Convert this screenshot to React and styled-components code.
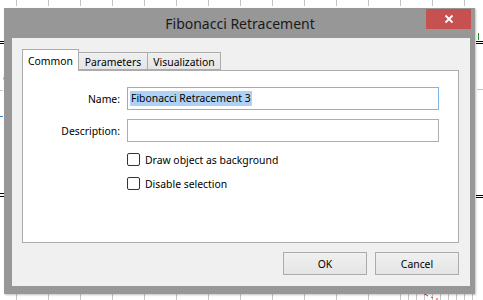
import React from "react";
import styled, { createGlobalStyle } from "styled-components";

const GlobalStyle = createGlobalStyle`
  html, body { margin: 0; padding: 0; background: #ffffff; overflow: hidden; }
  body { font-family: "Noto Sans", "Open Sans", sans-serif; }
`;

const Page = styled.div`
  position: relative;
  width: 483px;
  height: 300px;
  box-sizing: border-box;
  padding: 8px 0 0 4px;
  background: #ffffff;
`;

const ChartLayer = styled.svg`
  position: absolute;
  left: 0;
  top: 0;
  width: 483px;
  height: 300px;
`;

const Window = styled.div`
  position: relative;
  width: 471px;
  height: 286px;
  box-sizing: border-box;
  background: #979797;
  padding: 0 5px 8px 8px;
  display: flex;
  flex-direction: column;
  box-shadow: 1px 1px 2px rgba(0, 0, 0, 0.25);
`;

const TitleBar = styled.div`
  height: 30px;
  display: flex;
  align-items: center;
  justify-content: center;
  font-size: 14px;
  color: #1a1a1a;
  padding-right: 2px;
`;

const CloseButton = styled.div`
  position: absolute;
  top: 1px;
  right: 4px;
  width: 45px;
  height: 20px;
  background: #c75050;
  display: flex;
  align-items: center;
  justify-content: center;
`;

const Client = styled.div`
  flex: 1;
  background: #f0f0f0;
  padding: 11px 11px 11px 10px;
  display: flex;
  flex-direction: column;
  font-size: 10.4px;
  color: #000;
`;

const TabBar = styled.div`
  display: flex;
  align-items: flex-end;
  height: 21px;
  position: relative;
  z-index: 1;
`;

const Tab = styled.div`
  box-sizing: border-box;
  height: ${(p) => (p.$selected ? "22px" : "18px")};
  width: ${(p) => p.$w}px;
  margin-left: ${(p) => (p.$first ? "0" : "-1px")};
  border: 1px solid #acacac;
  border-bottom: ${(p) => (p.$selected ? "none" : "1px solid #acacac")};
  background: ${(p) =>
    p.$selected ? "#ffffff" : "linear-gradient(#f0f0f0, #e5e5e5)"};
  display: flex;
  align-items: center;
  justify-content: center;
  padding-top: ${(p) => (p.$selected ? "0" : "1px")};
  margin-bottom: ${(p) => (p.$selected ? "-1px" : "0")};
  position: relative;
  z-index: ${(p) => (p.$selected ? 2 : 1)};
`;

const Panel = styled.div`
  flex: 1;
  background: #ffffff;
  border: 1px solid #acacac;
  margin-top: 0;
  padding: 16px 19px 0 0;
  display: grid;
  grid-template-columns: 97px 312px;
  column-gap: 7px;
  grid-auto-rows: min-content;
  align-content: start;
`;

const Label = styled.div`
  text-align: right;
  align-self: center;
  margin-top: ${(p) => p.$mt || 0}px;
`;

const Field = styled.div`
  box-sizing: border-box;
  height: 23px;
  border: 1px solid ${(p) => (p.$focused ? "#7eb4ea" : "#abadb3")};
  background: #fff;
  display: flex;
  align-items: center;
  padding-left: 2px;
  margin-top: ${(p) => p.$mt || 0}px;
`;

const Selected = styled.span`
  background: #aed1f5;
  line-height: 15px;
  padding: 0 1px;
`;

const CheckRow = styled.label`
  grid-column: 2;
  display: flex;
  align-items: center;
  gap: 5px;
  height: 13px;
  margin-top: ${(p) => p.$mt}px;
`;

const Box = styled.span`
  box-sizing: border-box;
  width: 13px;
  height: 13px;
  border: 1px solid #333;
  border-radius: 2px;
  background: #fff;
`;

const ButtonRow = styled.div`
  display: flex;
  justify-content: flex-end;
  gap: 8px;
  margin-top: 9px;
`;

const Button = styled.div`
  box-sizing: border-box;
  width: 84px;
  height: 23px;
  border: 1px solid #acacac;
  background: linear-gradient(#f0f0f0, #e5e5e5);
  display: flex;
  align-items: center;
  justify-content: center;
`;

const topTicks = [16, 48, 80, 112, 144, 176, 208, 240, 272, 304, 336, 368, 400, 432, 464];
const bottomTicks = [16, 48, 80, 112, 144, 176, 208, 240, 272, 304, 336, 368, 400, 408, 416, 424, 432, 440, 448, 456, 464, 472];

export default function App() {
  return (
    <>
      <GlobalStyle />
      <Page>
        <ChartLayer viewBox="0 0 483 300">
          {topTicks.map((x) => (
            <line key={"t" + x} x1={x + 0.5} y1="0" x2={x + 0.5} y2="6" stroke="#c4c4c4" />
          ))}
          {bottomTicks.map((x) => (
            <line key={"b" + x} x1={x + 0.5} y1="294" x2={x + 0.5} y2="300" stroke="#c4c4c4" />
          ))}
          <line x1="0" y1="41.5" x2="4" y2="41.5" stroke="#000" />
          <line x1="0" y1="43.5" x2="4" y2="43.5" stroke="#000" />
          <line x1="0" y1="193.5" x2="4" y2="193.5" stroke="#000" />
          <line x1="0" y1="196.5" x2="4" y2="196.5" stroke="#000" />
          <line x1="0" y1="90.5" x2="3" y2="90.5" stroke="#c4c4c4" />
          <line x1="0" y1="116.5" x2="3" y2="116.5" stroke="#3a7fd5" />
          <line x1="476" y1="41.5" x2="483" y2="41.5" stroke="#000" />
          <line x1="476" y1="43.5" x2="483" y2="43.5" stroke="#000" />
          <line x1="476" y1="195.5" x2="483" y2="195.5" stroke="#000" />
          <line x1="476" y1="197.5" x2="483" y2="197.5" stroke="#000" />
          <line x1="477" y1="89.5" x2="483" y2="89.5" stroke="#c4c4c4" />
          <line x1="478.5" y1="33" x2="478.5" y2="40" stroke="#2a8a2a" />
          <line x1="4" y1="77.5" x2="4" y2="79.5" stroke="#d33" />
          <path d="M423 293 L428 296 M431 297 L433 298 M436 299 L438 299" stroke="#d33" />
        </ChartLayer>
        <Window>
          <TitleBar>Fibonacci Retracement</TitleBar>
          <CloseButton>
            <svg width="10" height="10" viewBox="0 0 10 10">
              <path d="M1.5 1.5 L8.5 8.5 M8.5 1.5 L1.5 8.5" stroke="#fff" strokeWidth="1.8" />
            </svg>
          </CloseButton>
          <Client>
            <TabBar>
              <Tab $selected $first $w={57}>Common</Tab>
              <Tab $w={70}>Parameters</Tab>
              <Tab $w={74}>Visualization</Tab>
            </TabBar>
            <Panel>
              <Label>Name:</Label>
              <Field $focused>
                <Selected>Fibonacci Retracement 3</Selected>
              </Field>
              <Label $mt={9}>Description:</Label>
              <Field $mt={9} />
              <CheckRow $mt={11}>
                <Box />
                Draw object as background
              </CheckRow>
              <CheckRow $mt={11}>
                <Box />
                Disable selection
              </CheckRow>
            </Panel>
            <ButtonRow>
              <Button>OK</Button>
              <Button>Cancel</Button>
            </ButtonRow>
          </Client>
        </Window>
      </Page>
    </>
  );
}
